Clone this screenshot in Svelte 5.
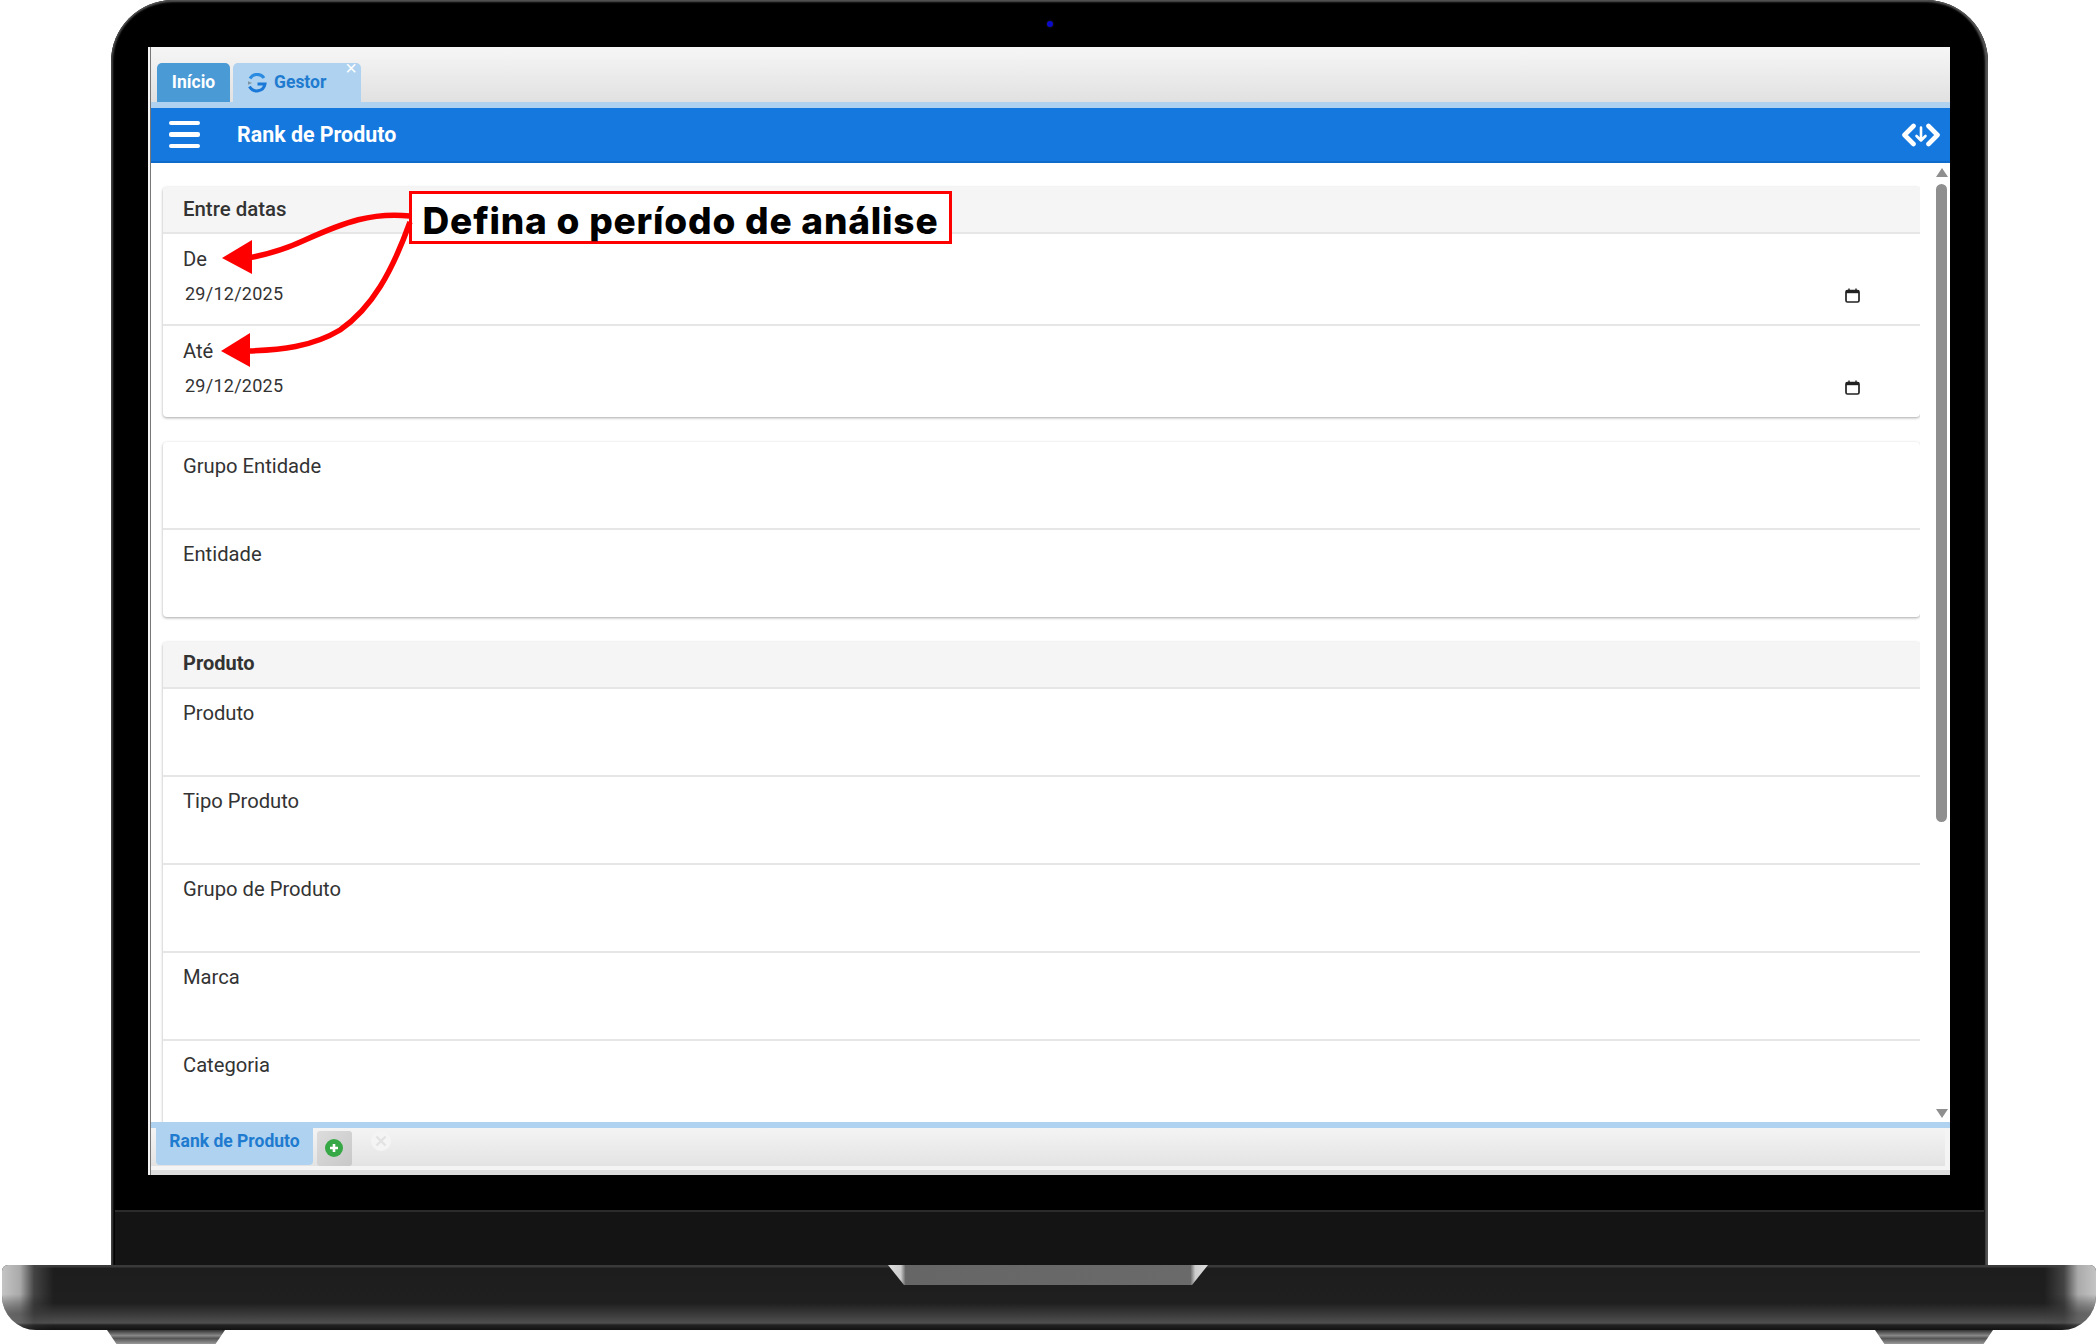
<script>
  const card2 = ['Grupo Entidade', 'Entidade'];
  const card3 = ['Produto', 'Tipo Produto', 'Grupo de Produto', 'Marca', 'Categoria'];
  const dates = ['De', 'Até'];
</script>

<div class="stage">
  <div class="lid">
    <span class="camera"></span>
    <div class="screen">
      <div class="inner">
        <div class="topbar">
          <div class="tab home">Início</div>
          <div class="tab gestor">
            <svg class="g" viewBox="0 0 20 20" width="20" height="20">
              <path d="M17 5 A8.3 8.3 0 0 0 3 5.5" fill="none" stroke="#2a8be0" stroke-width="3"/>
              <path d="M2.5 13.5 A8.3 8.3 0 0 0 18 11 H10.5" fill="none" stroke="#1a78d8" stroke-width="3"/>
              <path d="M1 8.2 L5 10 L1 11.8 Z" fill="#7f93a5"/>
            </svg>
            <span>Gestor</span>
            <span class="x">×</span>
          </div>
        </div>
        <header class="head">
          <div class="burger"><i></i><i></i><i></i></div>
          <h1>Rank de Produto</h1>
          <svg class="dev" viewBox="0 0 38 24" width="38" height="24" fill="none" stroke="#fff" stroke-linecap="round" stroke-linejoin="round">
            <path d="M11.5 3 L2.5 12 L11.5 21" stroke-width="4.6"/>
            <path d="M26.5 3 L35.5 12 L26.5 21" stroke-width="4.6"/>
            <path d="M19 4.5 V17.5 M14.5 13 L19 17.5 L23.5 13" stroke-width="2.6"/>
          </svg>
        </header>

        <div class="body">
          <main class="content">
            <section class="card">
              <div class="card-head normal">Entre datas</div>
              {#each dates as d}
                <div class="row date">
                  <label>{d}</label>
                  <div class="value">
                    <span>29/12/2025</span>
                    <svg viewBox="0 0 15 15" width="15" height="15" fill="none">
                      <rect x="1" y="2.5" width="13" height="11.5" rx="1.5" stroke="#222" stroke-width="1.7"/>
                      <rect x="1" y="2" width="13" height="3.2" fill="#222"/>
                      <path d="M4 0.5V2.5M11 0.5V2.5" stroke="#222" stroke-width="1.4"/>
                    </svg>
                  </div>
                </div>
              {/each}
            </section>

            <section class="card">
              {#each card2 as l}
                <div class="row"><label>{l}</label></div>
              {/each}
            </section>

            <section class="card">
              <div class="card-head">Produto</div>
              {#each card3 as l}
                <div class="row"><label>{l}</label></div>
              {/each}
            </section>
          </main>
          <div class="scroll">
            <span class="up"></span>
            <span class="thumb"></span>
            <span class="down"></span>
          </div>
        </div>

        <footer class="foot">
          <div class="bar">
            <div class="ftab">Rank de Produto</div>
            <div class="add">
              <svg viewBox="0 0 18 18" width="18" height="18">
                <circle cx="9" cy="9" r="9" fill="#37a846"/>
                <path d="M9 5V13M5 9H13" stroke="#fff" stroke-width="2.6"/>
              </svg>
            </div>
            <svg class="close" viewBox="0 0 20 20" width="20" height="20">
              <circle cx="10" cy="10" r="10" fill="#f4f4f4"/>
              <path d="M5.5 5.5L14.5 14.5M14.5 5.5L5.5 14.5" stroke="#e2e2e2" stroke-width="2.4"/>
            </svg>
          </div>
        </footer>
      </div>
    </div>
    <div class="chin"></div>
  </div>

  <div class="base">
    <span class="cap left"></span>
    <span class="cap right"></span>
    <span class="notch"></span>
  </div>
  <div class="feet"><span></span><span></span></div>

  <div class="callout">Defina o período de análise</div>
  <svg class="arrows" viewBox="0 0 2098 1344" width="2098" height="1344" fill="none">
    <path d="M410 216 C372 212 345 222 305 240 C288 248 270 254 248 258" stroke="#f00" stroke-width="5.5"/>
    <path d="M222 258 L252 240 L252 274 Z" fill="#f00"/>
    <path d="M410 222 C392 272 372 308 340 330 C312 347 280 350 248 351" stroke="#f00" stroke-width="5.5"/>
    <path d="M221 351 L250 333 L250 367 Z" fill="#f00"/>
  </svg>
</div>

<style>
  :global(body) { margin: 0; background: #fff; font-family: Roboto, "Liberation Sans", sans-serif; }
  .stage { position: relative; width: 2098px; height: 1344px; overflow: hidden; background: #fff; }

  .lid {
    position: relative;
    box-sizing: border-box;
    width: 1877px;
    height: 1265px;
    margin-left: 111px;
    padding: 47px 38px 0 37px;
    background: #000;
    border-radius: 62px 62px 0 0;
    box-shadow: inset 0 3px 2px -1px #555, inset 3px 0 2px -1px #444, inset -4px 0 2px -1px #555;
    display: flex;
    flex-direction: column;
  }
  .camera { position: absolute; left: 936px; top: 21px; width: 6px; height: 6px; border-radius: 50%; background: #0a0ac8; box-shadow: 0 0 3px #223; }

  .screen { height: 1128px; background: #f4f4f4; padding-left: 2px; box-sizing: border-box; flex: none; }
  .inner { height: 100%; border-left: 1px solid #777; display: flex; flex-direction: column; background: #fff; }

  .topbar {
    height: 55px; flex: none; box-sizing: border-box; padding: 15px 0 0 6px;
    display: flex; gap: 3px; align-items: flex-end;
    background: linear-gradient(#f6f6f6, #e1e1e1);
  }
  .tab {
    height: 39px; border-radius: 5px 5px 0 0; box-sizing: border-box;
    font: 700 17.5px/39px Roboto, sans-serif; display: flex; align-items: center;
  }
  .home { width: 73px; background: #4a9ad6; color: #fff; justify-content: center; }
  .gestor { position: relative; width: 128px; background: #aed2ef; color: #1f7bd0; padding-left: 14px; gap: 7px; }
  .x { position: absolute; right: 4px; top: -7px; color: #fff; font: 400 20px/24px "Liberation Sans", sans-serif; }

  .head {
    flex: none; box-sizing: border-box; background: #1478de;
    border-top: 6px solid #aed2ef; height: 61px; border-bottom: 2px solid #0f6bc9;
    display: flex; align-items: center; padding: 0 10px 0 18px;
  }
  .burger { width: 31px; display: flex; flex-direction: column; gap: 7px; }
  .burger i { display: block; height: 4.5px; background: #fff; border-radius: 2px; }
  h1 { margin: 0 0 0 37px; font: 700 21.4px/24px Roboto, sans-serif; color: #fff; flex: 1; }

  .body { flex: 1; min-height: 0; display: flex; }
  .content { flex: 1; min-width: 0; overflow: hidden; box-sizing: border-box; padding: 24px 0 0 12px; display: flex; flex-direction: column; gap: 25px; }
  .card {
    flex: none; background: #fff; border-radius: 4px;
    box-shadow: 0 1px 3px rgba(0,0,0,.35);
  }
  .card-head {
    height: 47px; box-sizing: border-box; background: #f5f5f5; border-bottom: 2px solid #e6e6e6;
    border-radius: 4px 4px 0 0; padding: 0 20px; font: 700 20px/43px Roboto, sans-serif; color: #333;
  }
  .card-head.normal { font-weight: 500; font-size: 20.4px; line-height: 45px; }
  .row { height: 88px; box-sizing: border-box; padding: 11px 20px 0; border-bottom: 2px solid #e6e6e6; }
  .row:last-child { border-bottom: 0; height: 87px; }
  .row.date { height: 92px; padding-top: 12px; }
  .row.date:last-child { height: 91px; }
  label { display: block; font: 400 20.2px/26px Roboto, sans-serif; color: #333; }
  .value { display: flex; align-items: center; justify-content: space-between; margin-top: 9px; padding: 0 40px 0 2px; font: 400 18px/26px Roboto, sans-serif; letter-spacing: .25px; color: #333; }
  .value svg { margin-top: 3px; }

  .scroll {
    width: 30px; flex: none; box-sizing: border-box; padding: 5px 3px 4px 16px;
    display: flex; flex-direction: column; align-items: center;
  }
  .up, .down { width: 0; height: 0; border-left: 6.5px solid transparent; border-right: 6.5px solid transparent; }
  .up { border-bottom: 9px solid #8f8f8f; }
  .down { border-top: 9px solid #8f8f8f; margin-top: auto; }
  .thumb { width: 11px; height: 638px; margin-top: 7px; background: #8f8f8f; border-radius: 5.5px; }

  .foot { height: 53px; flex: none; box-sizing: border-box; border-top: 6px solid #aed2ef; border-bottom: 5px solid #ddd; background: #f4f4f4; padding-right: 5px; }
  .bar {
    height: 38px; display: flex; align-items: flex-start; padding-left: 5px;
    background: linear-gradient(#f4f4f4, #e3e3e3);
  }
  .ftab {
    width: 157px; height: 37px; background: #aed2ef; color: #1f7bd0; border-radius: 0 0 4px 4px;
    font: 700 17.5px/27px Roboto, sans-serif; text-align: center; flex: none;
  }
  .add {
    width: 35px; height: 35px; margin: 3px 0 0 4px; background: linear-gradient(135deg, #dcdcdc, #c8c8c8);
    border-radius: 3px; display: flex; align-items: center; justify-content: center; flex: none;
  }
  .add svg { margin: -1px 0 0 -1px; }
  .close { margin: 3px 0 0 19px; }

  .chin {
    flex: none; height: 55px; margin: 35px -34px 0 -33px;
    background: #141414; border-top: 2px solid #2b2b2b; box-sizing: border-box;
  }

  .base {
    position: relative; width: 2094px; height: 65px; margin-left: 2px; overflow: hidden;
    border-radius: 6px 6px 34px 34px;
    background: linear-gradient(#3a3a3a 0, #3a3a3a 2px, #1d1d1d 3px, #1f1f1f 38px, #4f4f4f 58px, #222 60px, #111 100%);
  }
  .cap {
    position: absolute; top: 0; width: 56px; height: 100%;
    -webkit-mask-image: linear-gradient(#000 45%, rgba(0,0,0,.35) 75%, rgba(0,0,0,.15) 100%);
    mask-image: linear-gradient(#000 45%, rgba(0,0,0,.35) 75%, rgba(0,0,0,.15) 100%);
  }
  .cap.left { left: 0; background: linear-gradient(90deg, #c4c4c4 0, #aaa 18px, #444 32px, rgba(40,40,40,0) 52px); }
  .cap.right { right: 0; background: linear-gradient(270deg, #c4c4c4 0, #aaa 18px, #444 32px, rgba(40,40,40,0) 52px); }
  .notch {
    position: absolute; left: 886px; top: 0; width: 320px; height: 20px;
    background: linear-gradient(90deg, #ddd 0, #ccc 4%, #666 5.5%, #6a6a6a 94.5%, #ccc 96%, #ddd 100%);
    clip-path: polygon(0 0, 100% 0, 95% 100%, 5% 100%);
  }
  .feet { display: flex; justify-content: space-between; padding: 0 105px 0 107px; }
  .feet span {
    width: 118px; height: 14px; clip-path: polygon(0 0, 100% 0, 92% 100%, 8% 100%);
    background: linear-gradient(#333 0, #888 40%, #555 60%, #999 100%);
  }

  .callout {
    position: absolute; left: 409px; top: 191px; width: 543px; height: 53px; box-sizing: border-box;
    border: 3px solid #f00; background: #fff; color: #000;
    font: 800 37px/54px Inter, "Open Sans", sans-serif; letter-spacing: .8px; text-align: center; white-space: nowrap;
  }
  .arrows { position: absolute; left: 0; top: 0; pointer-events: none; }
</style>
